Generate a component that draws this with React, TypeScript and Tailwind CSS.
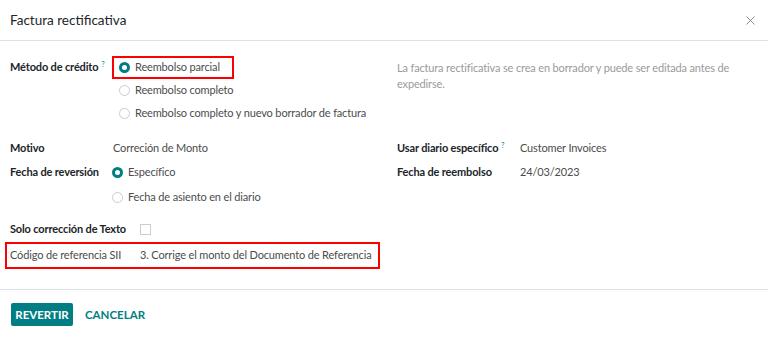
import { X } from "lucide-react";

const font = { fontFamily: 'Lato, "Noto Sans", sans-serif' };

function Radio({ checked }: { checked?: boolean }) {
  return checked ? (
    <span className="inline-block w-[11px] h-[11px] rounded-full border-[3px] border-[#017e84] bg-white shrink-0" />
  ) : (
    <span className="inline-block w-[11px] h-[11px] rounded-full border border-[#c9ccd2] bg-white shrink-0" />
  );
}

function RadioOption({ label, checked }: { label: string; checked?: boolean }) {
  return (
    <div className="flex items-center gap-[5px] h-[23px] whitespace-nowrap">
      <Radio checked={checked} />
      <span>{label}</span>
    </div>
  );
}

function Help() {
  return <span className="relative -top-[4px] text-[#017e84] text-[7px] ml-[3px] font-normal">?</span>;
}

export default function App() {
  return (
    <div
      className="w-[768px] h-[337px] bg-white text-[11px] tracking-[-0.15px] text-[#4c4c4c] whitespace-nowrap"
      style={font}
    >
      <div className="h-[41px] flex items-center justify-between pl-[10px] pr-[10px] border-b border-[#dee2e6]">
        <span className="text-[13.5px] tracking-normal text-[#212529]">Factura rectificativa</span>
        <X className="w-[15px] h-[15px] text-[#6c757d]" strokeWidth={1.25} />
      </div>

      <div className="h-[249px] pl-[10px] pt-[15px] border-b border-[#dee2e6]">
        <div className="flex">
          <div className="w-[387px] flex">
            <div className="w-[103px] shrink-0 h-[23px] font-bold text-[#212529] flex items-center">
              <span>
                Método de crédito
                <Help />
              </span>
            </div>
            <div className="flex flex-col">
              <div className="relative pl-[6px] h-[23px]">
                <div className="absolute left-[-1px] top-0 w-[122px] h-[23px] border-2 border-[#ff0000]" />
                <RadioOption label="Reembolso parcial" checked />
              </div>
              <div className="pl-[6px]">
                <RadioOption label="Reembolso completo" />
                <RadioOption label="Reembolso completo y nuevo borrador de factura" />
              </div>
            </div>
          </div>
          <div className="w-[345px] whitespace-normal text-[#9a9a9a] leading-[16px] pt-[4px]">
            La factura rectificativa se crea en borrador y puede ser editada antes de expedirse.
          </div>
        </div>

        <div className="flex mt-[11px]">
          <div className="w-[387px]">
            <div className="flex h-[24px] items-center">
              <span className="w-[103px] shrink-0 font-bold text-[#212529]">Motivo</span>
              <span>Correción de Monto</span>
            </div>
            <div className="flex h-[25px] items-center">
              <span className="w-[102px] shrink-0 font-bold text-[#212529]">Fecha de reversión</span>
              <RadioOption label="Específico" checked />
            </div>
            <div className="flex h-[24px] items-center pl-[102px]">
              <RadioOption label="Fecha de asiento en el diario" />
            </div>
          </div>
          <div>
            <div className="flex h-[24px] items-center">
              <span className="w-[123px] shrink-0 font-bold text-[#212529]">
                Usar diario específico
                <Help />
              </span>
              <span>Customer Invoices</span>
            </div>
            <div className="flex h-[25px] items-center">
              <span className="w-[123px] shrink-0 font-bold text-[#212529]">Fecha de reembolso</span>
              <span>24/03/2023</span>
            </div>
          </div>
        </div>

        <div className="mt-[8px] flex h-[24px] items-center">
          <span className="w-[130px] shrink-0 font-bold text-[#212529]">Solo corrección de Texto</span>
          <span className="w-[11px] h-[11px] border border-[#c9ccd2] bg-white" />
        </div>
        <div className="ml-[-5px] mt-[1px] w-[375px] h-[27px] border-2 border-[#ff0000] flex items-center pl-[3px]">
          <span className="w-[130px] shrink-0 text-[#4c4c4c]">Código de referencia SII</span>
          <span>3. Corrige el monto del Documento de Referencia</span>
        </div>
      </div>

      <div className="flex items-center gap-[12px] pl-[11px] pt-[13px]">
        <button className="h-[23px] w-[62px] bg-[#017e84] text-white font-bold text-[11.5px] tracking-normal rounded-[2px]">
          REVERTIR
        </button>
        <button className="h-[23px] text-[#017e84] font-bold text-[11.5px] tracking-normal">CANCELAR</button>
      </div>
    </div>
  );
}
